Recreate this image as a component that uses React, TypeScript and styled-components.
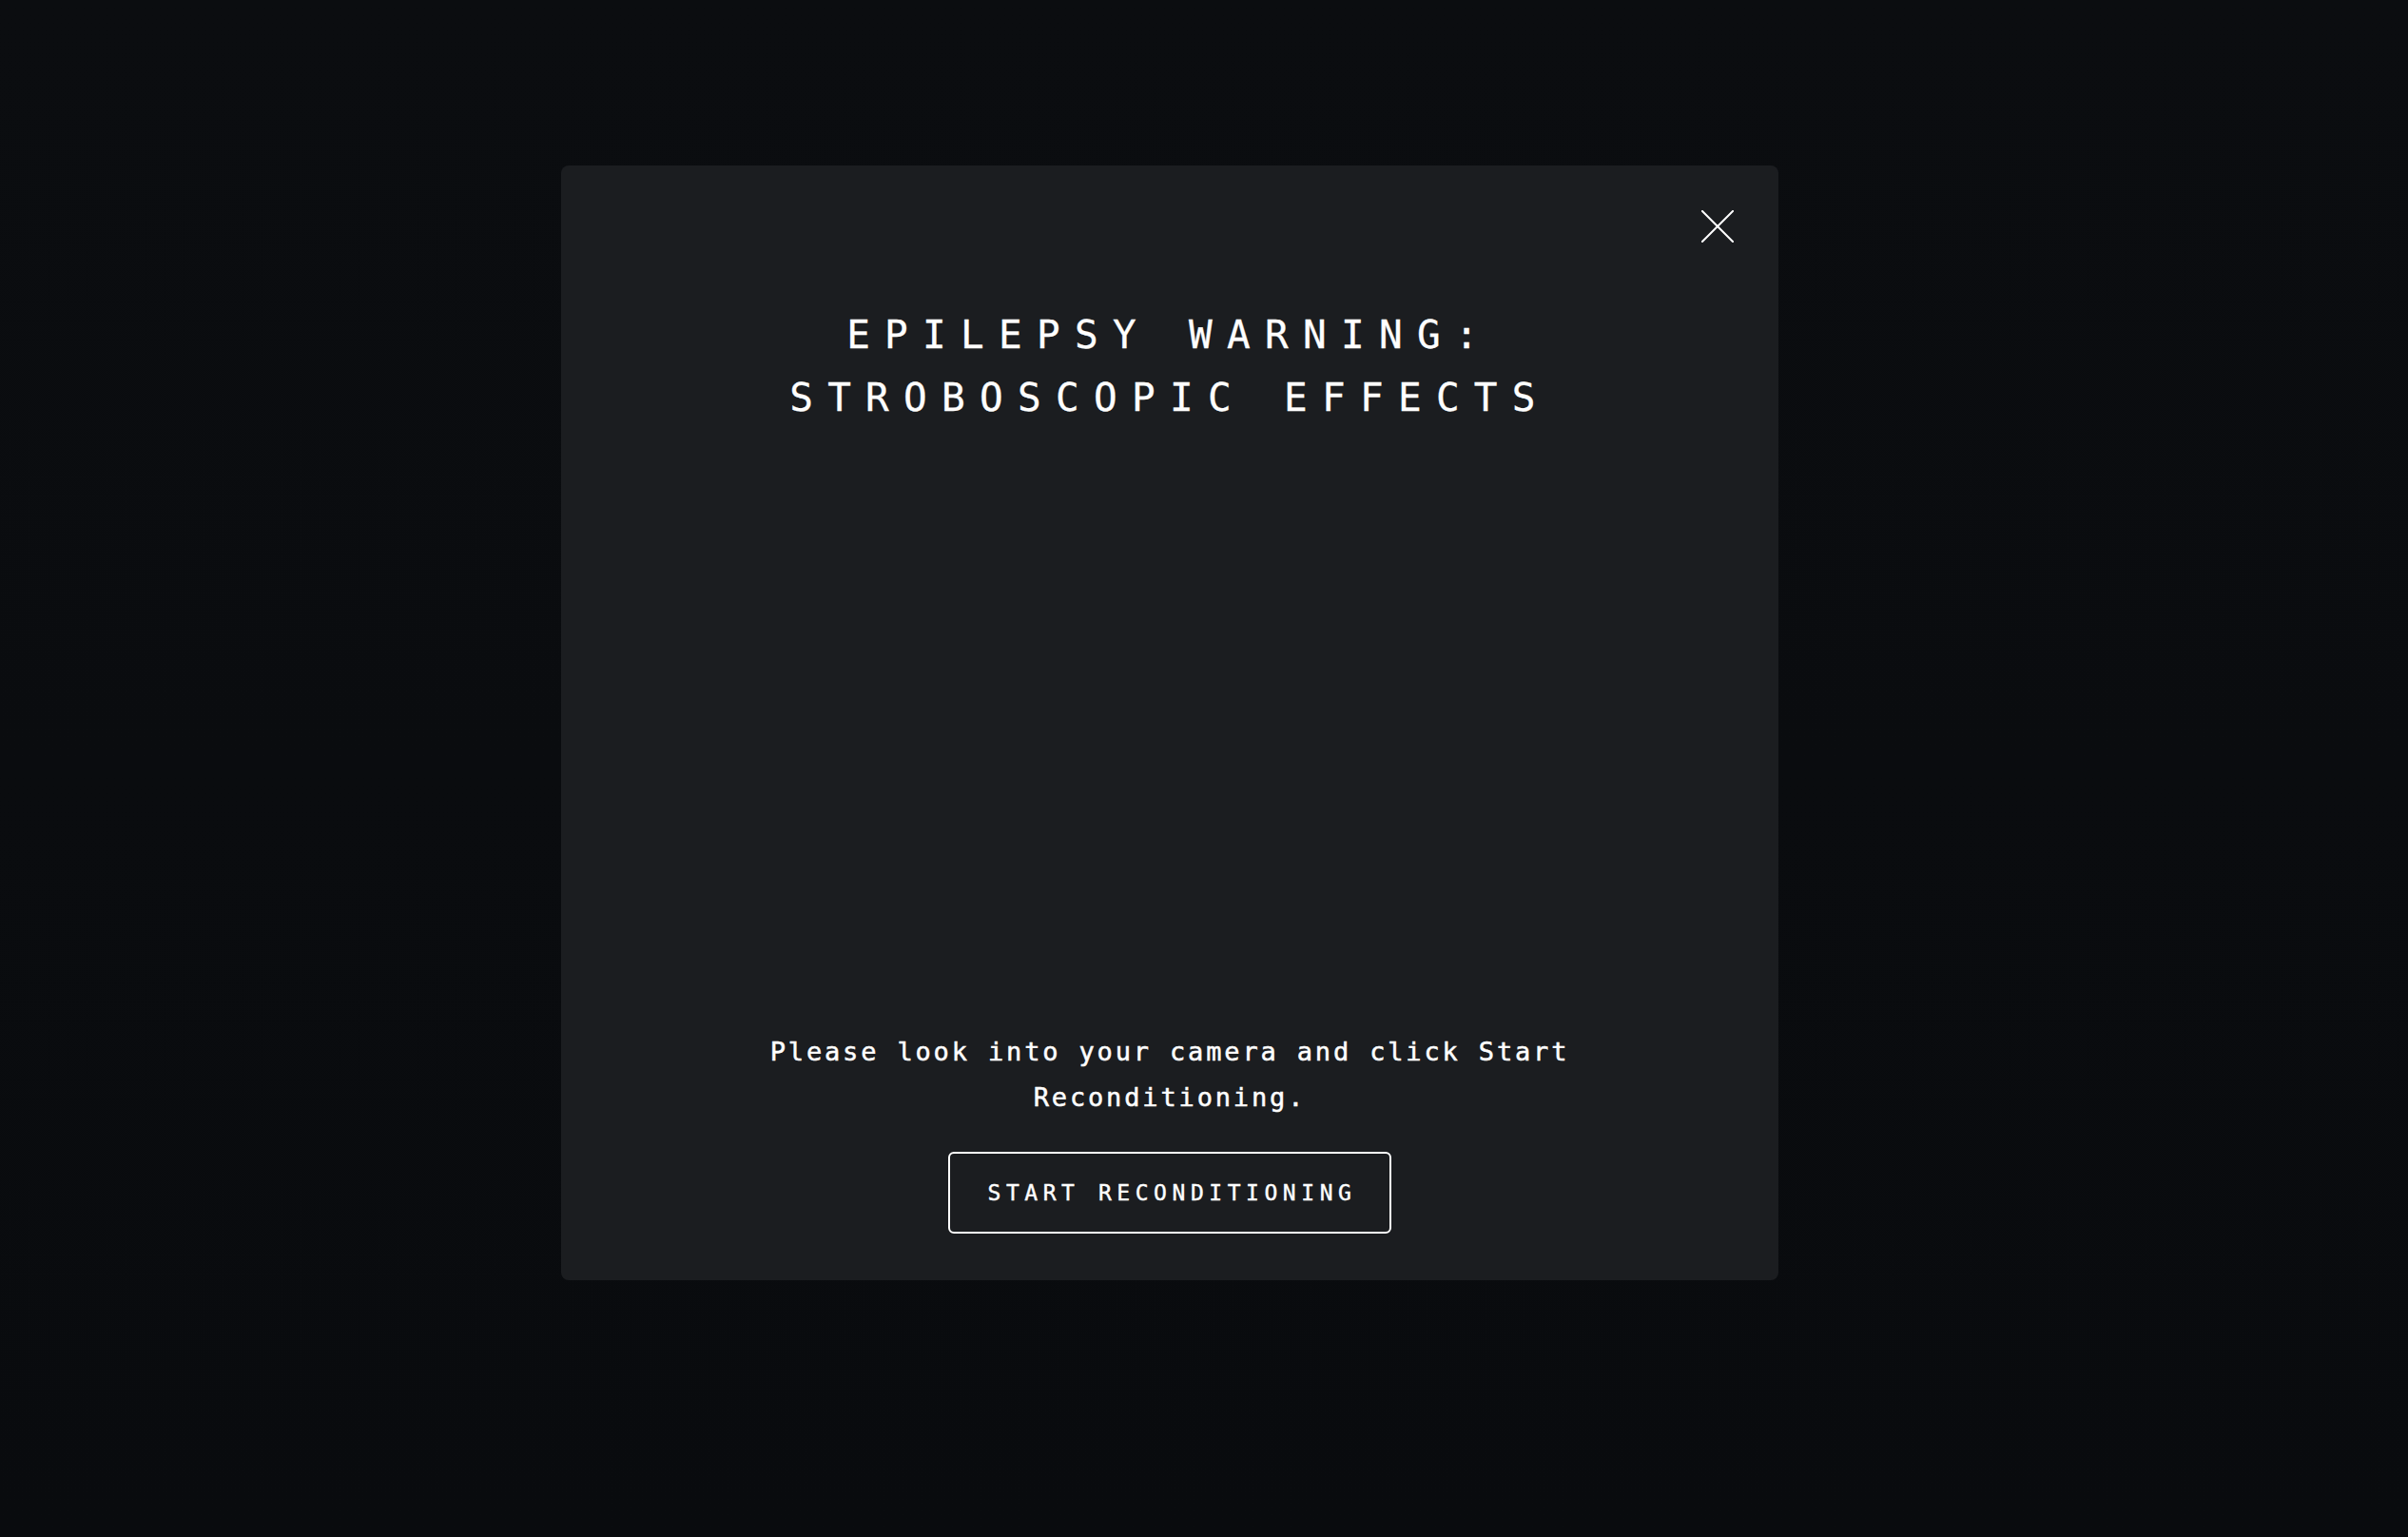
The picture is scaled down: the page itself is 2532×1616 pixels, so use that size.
import React from "react";
import styled, { createGlobalStyle } from "styled-components";

const GlobalStyle = createGlobalStyle`
  html, body {
    margin: 0;
    padding: 0;
    background: #0a0c0f;
  }
  body {
    font-family: "DejaVu Sans Mono", "Liberation Mono", monospace;
    color: #ffffff;
  }
  * { box-sizing: border-box; }
`;

const Page = styled.div`
  width: 2532px;
  height: 1616px;
  background: linear-gradient(180deg, #0b0d10 0%, #090b0e 100%);
  display: flex;
  align-items: flex-start;
  padding: 174px 0 0 590px;
`;

const Modal = styled.section`
  position: relative;
  width: 1280px;
  height: 1172px;
  background: #1b1d20;
  border-radius: 8px;
  display: flex;
  flex-direction: column;
  align-items: center;
  padding: 145px 0 49px;
`;

const CloseButton = styled.button`
  position: absolute;
  top: 47px;
  right: 47px;
  width: 34px;
  height: 34px;
  padding: 0;
  border: none;
  background: transparent;
  cursor: pointer;
  display: flex;
  align-items: center;
  justify-content: center;
`;

const Title = styled.h1`
  margin: 0;
  font-family: "DejaVu Sans Mono", "Liberation Mono", monospace;
  font-weight: 400;
  font-size: 41px;
  line-height: 66px;
  letter-spacing: 15.3px;
  text-align: center;
  color: #ffffff;
  text-transform: uppercase;
  -webkit-text-stroke: 0.3px #ffffff;
`;

const CameraArea = styled.div`
  flex: 1;
  width: 100%;
`;

const Instruction = styled.p`
  margin: 0;
  max-width: 900px;
  font-family: "DejaVu Sans Mono", "Liberation Mono", monospace;
  font-size: 27px;
  line-height: 48px;
  letter-spacing: 2.85px;
  text-align: center;
  color: #ffffff;
  -webkit-text-stroke: 0.5px #ffffff;
`;

const StartButton = styled.button`
  margin-top: 33px;
  width: 466px;
  height: 86px;
  border: 2px solid #ffffff;
  border-radius: 6px;
  background: transparent;
  color: #ffffff;
  font-family: "DejaVu Sans Mono", "Liberation Mono", monospace;
  font-size: 23px;
  letter-spacing: 5.55px;
  text-transform: uppercase;
  -webkit-text-stroke: 0.4px #ffffff;
  display: flex;
  align-items: center;
  justify-content: center;
  padding: 0 0 0 5px;
  cursor: pointer;
`;

const CloseIcon = () => (
  <svg width="34" height="34" viewBox="0 0 34 34" fill="none">
    <path d="M1 1 L33 33 M33 1 L1 33" stroke="#ffffff" strokeWidth="2" strokeLinecap="square" />
  </svg>
);

export default function App() {
  return (
    <>
      <GlobalStyle />
      <Page>
        <Modal>
          <CloseButton aria-label="Close">
            <CloseIcon />
          </CloseButton>
          <Title>
            Epilepsy Warning:
            <br />
            Stroboscopic Effects
          </Title>
          <CameraArea />
          <Instruction>
            Please look into your camera and click Start Reconditioning.
          </Instruction>
          <StartButton>Start Reconditioning</StartButton>
        </Modal>
      </Page>
    </>
  );
}
